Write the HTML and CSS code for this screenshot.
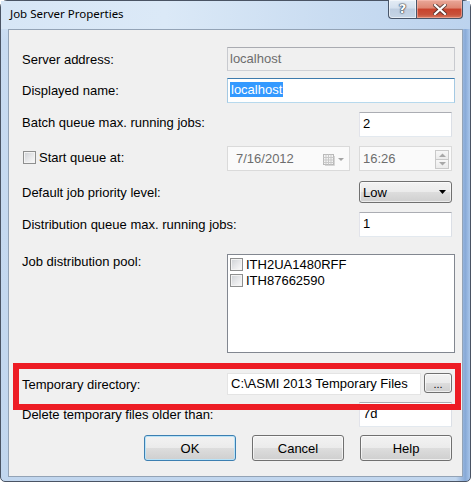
FILE: index.html
```html
<!DOCTYPE html>
<html>
<head>
<meta charset="utf-8">
<title>Job Server Properties</title>
<link rel="stylesheet" href="styles.css">
</head>
<body>
<div class="window">
  <div class="titlebar">
    <span class="title">Job Server Properties</span>
    <div class="caption">
      <div class="cbtn help"><span class="qmark">?</span></div>
      <div class="cbtn close">
        <svg width="14" height="11" viewBox="0 0 14 11">
          <path d="M2 1 L12 10 M12 1 L2 10" stroke="#3a2a28" stroke-width="4" stroke-linecap="square" fill="none" opacity="0.75"/>
          <path d="M2 1 L12 10 M12 1 L2 10" stroke="#ffffff" stroke-width="2.2" stroke-linecap="square" fill="none"/>
        </svg>
      </div>
    </div>
  </div>

  <div class="client">
    <div class="row r1">
      <span class="label">Server address:</span>
      <div class="tb wide readonly">localhost</div>
    </div>
    <div class="row r2">
      <span class="label">Displayed name:</span>
      <div class="tb wide focused"><span class="sel">localhost</span></div>
    </div>
    <div class="row r3">
      <span class="label lift">Batch queue max. running jobs:</span>
      <div class="tb narrow">2</div>
    </div>
    <div class="row r4">
      <span class="label check-label"><span class="chk"></span>Start queue at:</span>
      <div class="dtp">
        <span class="dtp-text">7/16/2012</span>
        <svg class="cal" width="22" height="12" viewBox="0 0 22 12">
          <rect x="0.5" y="0.5" width="10" height="10" fill="#f4f4f4" stroke="#b9b9b9"/>
          <path d="M0.5 3.5 H10.5 M0.5 6 H10.5 M0.5 8.5 H10.5 M3 0.5 V10.5 M5.5 0.5 V10.5 M8 0.5 V10.5" stroke="#c9c9c9" stroke-width="1" fill="none"/>
          <path d="M2 11.5 H11.5 V2" stroke="#d6d6d6" fill="none"/>
          <path d="M15 4 L21 4 L18 7 Z" fill="#a5a5a5"/>
        </svg>
      </div>
      <div class="dtp narrow time">
        <span class="dtp-text">16:26</span>
        <div class="spin">
          <div class="spin-btn"><svg width="7" height="4" viewBox="0 0 7 4"><path d="M0 4 L3.5 0.5 L7 4 Z" fill="#a8a8a8"/></svg></div>
          <div class="spin-btn"><svg width="7" height="4" viewBox="0 0 7 4"><path d="M0 0 L3.5 3.5 L7 0 Z" fill="#a8a8a8"/></svg></div>
        </div>
      </div>
    </div>
    <div class="row r5">
      <span class="label">Default job priority level:</span>
      <div class="combo narrow">
        <span>Low</span>
        <svg width="7" height="4" viewBox="0 0 7 4"><path d="M0 0 L7 0 L3.5 4 Z" fill="#000"/></svg>
      </div>
    </div>
    <div class="row r6">
      <span class="label">Distribution queue max. running jobs:</span>
      <div class="tb narrow">1</div>
    </div>
    <div class="row r7">
      <span class="label top">Job distribution pool:</span>
      <div class="listbox wide">
        <div class="item"><span class="chk"></span>ITH2UA1480RFF</div>
        <div class="item"><span class="chk"></span>ITH87662590</div>
      </div>
    </div>
    <div class="row r8">
      <span class="label">Temporary directory:</span>
      <div class="tb path">C:\ASMI 2013 Temporary Files</div>
      <div class="btn browse">...</div>
    </div>
    <div class="row r9">
      <span class="label">Delete temporary files older than:</span>
      <div class="tb narrow">7d</div>
    </div>
    <div class="buttons">
      <div class="btn push default">OK</div>
      <div class="btn push">Cancel</div>
      <div class="btn push">Help</div>
    </div>
  </div>

  <div class="annotation"></div>
</div>
</body>
</html>
```

FILE: styles.css
```css
* { box-sizing: border-box; }

html, body {
  margin: 0;
  padding: 0;
  background: #ffffff;
}

body {
  font-family: "Liberation Sans", Arial, sans-serif;
  font-size: 13px;
  line-height: 15px;
  color: #000;
}

.window {
  position: relative;
  width: 471px;
  height: 482px;
  border: 1px solid #4a5464;
  border-radius: 7px 7px 5px 5px;
  padding: 0 7px 4px;
  display: flex;
  flex-direction: column;
  background:
    linear-gradient(90deg, rgba(255,255,255,0) 0, rgba(255,255,255,0) 97%, rgba(110,150,205,0.7) 99%, rgba(150,185,230,0.6) 100%),
    linear-gradient(180deg, #d3e3f5 0, #c8dbf1 40px, #c1d6ee 100%);
}

/* title bar */
.titlebar {
  height: 28px;
  display: flex;
  justify-content: space-between;
  align-items: flex-start;
  background: linear-gradient(90deg, #d7e6f6 0%, #dbe9f7 35%, #c9dcf1 70%, #bcd3ee 100%);
  margin: 0 -7px;
  padding: 0 0 0 8px;
}

.title {
  font-family: "Noto Sans", "Open Sans", sans-serif;
  font-size: 11.5px;
  line-height: 16px;
  padding: 5px 0 0 1px;
  color: #000;
}

.caption {
  display: flex;
  margin-top: -1px;
  margin-right: 7px;
}

.cbtn {
  height: 19px;
  border: 1px solid #48566a;
  border-top: none;
  display: flex;
  align-items: center;
  justify-content: center;
}

.help {
  width: 28px;
  border-right: none;
  border-radius: 0 0 0 4px;
  background: linear-gradient(180deg, #e4ecf5 0%, #d4e0ee 45%, #bdcde0 50%, #c6d5e6 100%);
  box-shadow: inset 0 0 0 1px rgba(255,255,255,0.55);
}

.qmark {
  font-family: "DejaVu Sans", sans-serif;
  font-size: 13px;
  font-weight: bold;
  color: #fff;
  text-shadow: 0 0 1px #2b3440, 0 0 1px #2b3440, 0 0 2px #2b3440;
  line-height: 14px;
}

.close {
  width: 47px;
  border-radius: 0 0 4px 0;
  background: linear-gradient(180deg, #e9a899 0%, #de8672 45%, #c9432d 50%, #c8513b 80%, #d67a5f 100%);
  box-shadow: inset 0 0 0 1px rgba(255,200,190,0.5);
}

/* client area */
.client {
  height: 448px;
  border: 1px solid #93a3b6;
  background: #f0f0f0;
  padding: 17px 7px 0 13px;
  display: flex;
  flex-direction: column;
}

.row {
  display: flex;
  align-items: center;
}

.r2 { margin-top: 7px; }
.r3 { margin-top: 9px; }
.r4 { margin-top: 9px; }
.r5 { margin-top: 10px; }
.r6 { margin-top: 9px; }
.r7 { margin-top: 17px; align-items: flex-start; }
.r8 { margin-top: 20px; align-items: flex-start; }
.r9 { margin-top: 7px; }

.label {
  flex: 1;
  white-space: nowrap;
}

.label.lift { margin-bottom: 5px; }
.r8 .label { margin-top: 4px; }

.check-label {
  display: flex;
  align-items: center;
  margin-bottom: 2px;
}

.chk {
  width: 13px;
  height: 13px;
  border: 1px solid #8e8f8f;
  background: linear-gradient(135deg, #cdd0d4 0%, #e6e7e9 50%, #fbfbfb 100%);
  box-shadow: inset 0 0 0 1px #f3f3f3;
  flex: none;
}

.check-label .chk {
  margin: 0 3px 0 1px;
}

/* text boxes */
.tb {
  height: 25px;
  background: #fff;
  border: 1px solid;
  border-color: #abadb3 #dbdfe6 #e3e9ef #e2e3ea;
  padding: 3px 3px 0;
  white-space: nowrap;
  overflow: hidden;
}

.wide { width: 228px; }
.narrow { width: 93px; margin-right: 3px; }

.readonly {
  height: 24px;
  background: #f0f0f0;
  color: #6d6d6d;
  border-color: #a9abb1 #c8cacf #cfd1d6 #c8cacf;
  padding-left: 2px;
}

.focused {
  border-color: #3d7bad #a4c9e3 #b7d9ed #a4c9e3;
  padding-left: 2px;
}

.sel {
  background: #3399ff;
  color: #fff;
  padding: 0 1px;
}

/* date/time pickers */
.dtp {
  height: 25px;
  width: 123px;
  margin-right: 9px;
  background: #fafafa;
  border: 1px solid #dadada;
  color: #6d6d6d;
  display: flex;
  align-items: flex-start;
  justify-content: space-between;
  padding: 4px 0 0 8px;
}

.cal { margin: 3px 4px 0 0; }

.time {
  width: 93px;
  margin-right: 3px;
  padding-left: 3px;
}

.spin {
  display: flex;
  flex-direction: column;
  margin: -1px 2px 0 0;
}

.spin-btn {
  width: 14px;
  height: 10px;
  border: 1px solid #c9c9c9;
  background: linear-gradient(180deg, #f7f7f7, #ebebeb);
  display: flex;
  align-items: center;
  justify-content: center;
}

.spin-btn + .spin-btn { margin-top: -1px; }

/* combo */
.combo {
  height: 22px;
  border: 1px solid #707070;
  border-radius: 3px;
  background: linear-gradient(180deg, #f2f2f2 0%, #ebebeb 50%, #dddddd 51%, #cfcfcf 100%);
  box-shadow: inset 0 0 0 1px rgba(255,255,255,0.6);
  display: flex;
  align-items: center;
  justify-content: space-between;
  padding: 0 5px 0 3px;
}

/* list box */
.listbox {
  height: 99px;
  background: #fff;
  border: 1px solid #828790;
  padding: 1px 0 0 2px;
}

.item {
  height: 16px;
  display: flex;
  align-items: center;
  gap: 3px;
  white-space: nowrap;
}

/* path + browse */
.path {
  width: 194px;
  height: 22px;
  padding-top: 2px;
  border-color: #e4e4e4;
}

.btn {
  border: 1px solid #707070;
  border-radius: 3px;
  background: linear-gradient(180deg, #f2f2f2 0%, #ebebeb 50%, #dddddd 51%, #cfcfcf 100%);
  box-shadow: inset 0 0 0 1px rgba(255,255,255,0.65);
  display: flex;
  align-items: center;
  justify-content: center;
}

.browse {
  width: 28px;
  height: 20px;
  margin: 0 3px 0 3px;
  font-size: 11px;
  padding-top: 2px;
}

/* buttons */
.buttons {
  display: flex;
  justify-content: flex-end;
  gap: 16px;
  margin: 8px 3px 0 0;
}

.push {
  width: 92px;
  height: 26px;
}

.default {
  border-color: #3c7fb1;
  box-shadow: inset 0 0 0 1px #b9e3f8;
}

/* red highlight annotation laid over the dialog */
.annotation {
  position: absolute;
  left: 12px;
  top: 362px;
  width: 448px;
  height: 47px;
  border: 6px solid #ed1c24;
}
```
